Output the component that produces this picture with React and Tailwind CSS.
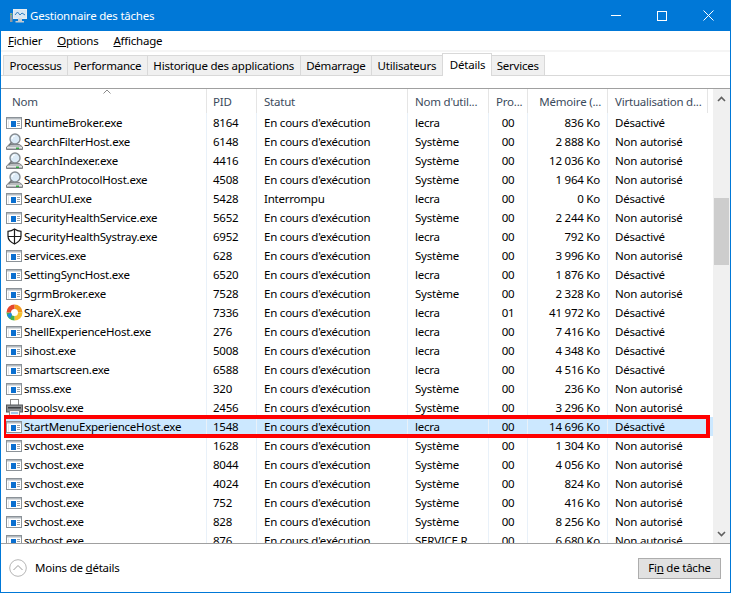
import React from "react";

const font = "font-['Noto_Sans','Open_Sans',sans-serif]";

const rows = [
  ["RuntimeBroker.exe", "8164", "En cours d'exécution", "lecra", "00", "836 Ko", "Désactivé", "app"],
  ["SearchFilterHost.exe", "6148", "En cours d'exécution", "Système", "00", "2 888 Ko", "Non autorisé", "search"],
  ["SearchIndexer.exe", "4416", "En cours d'exécution", "Système", "00", "12 036 Ko", "Non autorisé", "search"],
  ["SearchProtocolHost.exe", "4508", "En cours d'exécution", "Système", "00", "1 964 Ko", "Non autorisé", "search"],
  ["SearchUI.exe", "5428", "Interrompu", "lecra", "00", "0 Ko", "Désactivé", "app"],
  ["SecurityHealthService.exe", "5652", "En cours d'exécution", "Système", "00", "2 244 Ko", "Non autorisé", "app"],
  ["SecurityHealthSystray.exe", "6952", "En cours d'exécution", "lecra", "00", "792 Ko", "Désactivé", "shield"],
  ["services.exe", "628", "En cours d'exécution", "Système", "00", "3 996 Ko", "Non autorisé", "app"],
  ["SettingSyncHost.exe", "6520", "En cours d'exécution", "lecra", "00", "1 876 Ko", "Désactivé", "app"],
  ["SgrmBroker.exe", "7528", "En cours d'exécution", "Système", "00", "2 328 Ko", "Non autorisé", "app"],
  ["ShareX.exe", "7336", "En cours d'exécution", "lecra", "01", "41 972 Ko", "Désactivé", "sharex"],
  ["ShellExperienceHost.exe", "276", "En cours d'exécution", "lecra", "00", "7 416 Ko", "Désactivé", "app"],
  ["sihost.exe", "5008", "En cours d'exécution", "lecra", "00", "4 348 Ko", "Désactivé", "app"],
  ["smartscreen.exe", "6588", "En cours d'exécution", "lecra", "00", "4 516 Ko", "Désactivé", "app"],
  ["smss.exe", "320", "En cours d'exécution", "Système", "00", "236 Ko", "Non autorisé", "app"],
  ["spoolsv.exe", "2456", "En cours d'exécution", "Système", "00", "3 296 Ko", "Non autorisé", "printer"],
  ["StartMenuExperienceHost.exe", "1548", "En cours d'exécution", "lecra", "00", "14 696 Ko", "Désactivé", "app"],
  ["svchost.exe", "1628", "En cours d'exécution", "Système", "00", "1 304 Ko", "Non autorisé", "app"],
  ["svchost.exe", "8044", "En cours d'exécution", "Système", "00", "4 056 Ko", "Non autorisé", "app"],
  ["svchost.exe", "4024", "En cours d'exécution", "Système", "00", "824 Ko", "Non autorisé", "app"],
  ["svchost.exe", "752", "En cours d'exécution", "Système", "00", "416 Ko", "Non autorisé", "app"],
  ["svchost.exe", "828", "En cours d'exécution", "Système", "00", "8 256 Ko", "Non autorisé", "app"],
  ["svchost.exe", "876", "En cours d'exécution", "SERVICE R...", "00", "6 680 Ko", "Non autorisé", "app"],
];

const RowIcon = ({ type }) => {
  if (type === "search")
    return (
      <svg width="17" height="17" viewBox="0 0 17 17" className="shrink-0">
        <path d="M3.500 11.500h10l3 2.500v2.500H.5V14z" fill="#b9bcbf" stroke="#7c8083" />
        <path d="M1 14.500h15" stroke="#e6e6e6" />
        <rect x="10" y="14.500" width="3" height="1.500" fill="#35a844" />
        <circle cx="9" cy="6" r="5" fill="#dcebf7" stroke="#858c92" strokeWidth="1.400" />
        <path d="M6 6a3 3 0 0 1 3-3" fill="none" stroke="#fff" strokeWidth="1.200" />
        <path d="M5.500 9.500L3 12.500" stroke="#74787b" strokeWidth="1.800" />
      </svg>
    );
  if (type === "shield")
    return (
      <svg width="17" height="17" viewBox="0 0 17 17" className="shrink-0">
        <path d="M8.500 1c2 1.500 4 2.200 6.500 2.300v5c0 3.500-2.700 6-6.500 7.700C4.700 14.300 2 11.800 2 8.300v-5C4.500 3.200 6.500 2.500 8.500 1z" fill="#fff" stroke="#1a1a1a" strokeWidth="1.200" />
        <path d="M8.500 1v15M2 8.500h13" stroke="#1a1a1a" strokeWidth="1.200" />
      </svg>
    );
  if (type === "sharex")
    return (
      <svg width="17" height="17" viewBox="0 0 17 17" className="shrink-0">
        <path d="M8.500 .5a8 8 0 0 1 8 8h-4.500A3.500 3.500 0 0 0 8.500 5z" fill="#f39a1f" />
        <path d="M16.500 8.500a8 8 0 0 1-8 8V12a3.500 3.500 0 0 0 3.500-3.500z" fill="#f6c02c" />
        <path d="M8.500 16.500a8 8 0 0 1-8-8H5A3.500 3.500 0 0 0 8.500 12z" fill="#45b04a" />
        <path d="M.5 8.500a8 8 0 0 1 8-8V5A3.500 3.500 0 0 0 5 8.500z" fill="#e5472d" />
        <path d="M1 11a8 8 0 0 0 3 3.500l2-3.500-1-2.500z" fill="#1e88e5" />
      </svg>
    );
  if (type === "printer")
    return (
      <svg width="17" height="17" viewBox="0 0 17 17" className="shrink-0">
        <rect x="4.500" y=".5" width="8" height="6" fill="#fff" stroke="#8a8a8a" />
        <rect x=".5" y="6" width="16" height="7" fill="#8d8f92" stroke="#55585b" />
        <rect x="2" y="8" width="13" height="1.500" fill="#3c3f42" />
        <rect x="3.500" y="11.500" width="10" height="5" fill="#f4f4f4" stroke="#8a8a8a" />
        <path d="M5 14h7" stroke="#4d9be0" />
      </svg>
    );
  return (
    <svg width="16" height="14" viewBox="0 0 16 14" className="shrink-0">
      <rect x=".5" y="1.500" width="15" height="11" fill="#fff" stroke="#8b9298" />
      <rect x="1" y="2" width="14" height="1.500" fill="#b4babf" />
      <rect x="5" y="5" width="5" height="6" fill="#0a6fd0" />
      <path d="M11 5.500h3M11 7.500h3M11 9.500h3" stroke="#9aa1a7" />
      <path d="M2.500 4.500v7" stroke="#e3e6e8" />
    </svg>
  );
};

const Cell = ({ className = "", children }) => (
  <div className={`flex h-full items-center overflow-hidden whitespace-nowrap border-r border-[#e9f1f9] ${className}`}>
    {children}
  </div>
);

const Row = ({ row }) => {
  const selected = row[0] === "StartMenuExperienceHost.exe";
  return (
    <div className={`flex h-[19px] shrink-0 ${selected ? "bg-[#cce8ff]" : ""}`}>
      <Cell className="w-[203px] pl-[2px]">
        <span className="flex w-[20px] shrink-0 justify-start"><RowIcon type={row[7]} /></span>
        <span className="-ml-[2px]">{row[0]}</span>
      </Cell>
      <Cell className="w-[50px] pl-[6px]">{row[1]}</Cell>
      <Cell className="w-[151px] pl-[7px]">{row[2]}</Cell>
      <Cell className="w-[81px] pl-[7px]">{row[3]}</Cell>
      <Cell className="w-[39px] justify-center">{row[4]}</Cell>
      <Cell className="w-[80px] justify-end pr-[7px]">{row[5]}</Cell>
      <Cell className="w-[100px] pl-[7px] border-r-0">{row[6]}</Cell>
    </div>
  );
};

const Head = ({ className = "", children }) => (
  <div className={`flex h-full items-center overflow-hidden whitespace-nowrap border-r border-[#e5e5e5] pt-[1px] text-[#3b4a5c] ${className}`}>
    {children}
  </div>
);

const Tab = ({ children, active }) =>
  active ? (
    <div className="relative z-10 -mx-px -mt-[2px] flex h-[23px] items-center border border-b-0 border-[#d9d9d9] bg-white pl-[7px] pr-[6px]">
      {children}
    </div>
  ) : (
    <div className="flex h-[21px] items-center border border-[#d9d9d9] border-l-0 bg-[#f0f0f0] px-[5.5px] first:border-l">
      {children}
    </div>
  );

const App = () => {
  return (
    <div className={`${font} flex h-[593px] w-[731px] flex-col overflow-hidden border border-[#0078d7] bg-white text-[11.5px] tracking-[-0.22px] text-black`}>
      {/* title bar */}
      <div className="-mx-px -mt-px flex h-[31px] shrink-0 items-center bg-[#0078d7] pl-[9px] text-white">
        <svg width="18" height="16" viewBox="0 0 18 16" className="shrink-0">
          <rect x="4.500" y="1.500" width="13" height="9" fill="#d6e6f3" stroke="#e8edf1" />
          <path d="M6 7l2.500-3 2.500 3 2-2 3 2" fill="none" stroke="#2f7fc4" />
          <rect x="1" y="5" width="2.500" height="9" fill="#8f9aa3" />
          <rect x="1.500" y="6" width="1.500" height="1" fill="#4fc25c" />
          <path d="M9 10.500h4V13H9zM6.500 13H15v1.500H6.500z" fill="#c3ccd4" />
        </svg>
        <span className="ml-[3px]">Gestionnaire des tâches</span>
        <div className="ml-auto flex h-full items-center">
          <div className="flex w-[46px] justify-center">
            <div className="h-px w-[10px] bg-white" />
          </div>
          <div className="flex w-[46px] justify-center">
            <div className="h-[10px] w-[10px] border border-white" />
          </div>
          <div className="flex w-[46px] justify-center">
            <svg width="11" height="11" viewBox="0 0 11 11"><path d="M.5.500l10 10M10.500.500l-10 10" stroke="#fff" /></svg>
          </div>
        </div>
      </div>

      {/* menu */}
      <div className="flex h-[19px] shrink-0 items-center gap-[15px] pl-[7px]">
        <span><u>F</u>ichier</span>
        <span><u>O</u>ptions</span>
        <span><u>A</u>ffichage</span>
      </div>

      {/* tabs */}
      <div className="h-[2px] shrink-0 bg-[#f5f5f5]" />
      <div className="flex h-[24px] shrink-0 items-end border-b border-[#d9d9d9] pl-[2px]">
        <div className="flex items-end -mb-px">
          <Tab>Processus</Tab>
          <Tab>Performance</Tab>
          <Tab>Historique des applications</Tab>
          <Tab>Démarrage</Tab>
          <Tab>Utilisateurs</Tab>
          <Tab active>Détails</Tab>
          <Tab>Services</Tab>
        </div>
      </div>

      {/* table */}
      <div className="mt-[12px] flex min-h-0 flex-1 border-y border-[#a0a0a0]">
        <div className="ml-[1px] flex min-w-0 flex-1 flex-col overflow-hidden pl-[2px]">
          <div className="relative flex h-[24px] shrink-0">
            <svg width="8" height="5" viewBox="0 0 8 5" className="absolute left-[99px] top-0">
              <path d="M.5 4.500L4 1l3.500 3.500" fill="none" stroke="#8a8a8a" />
            </svg>
            <Head className="w-[203px] pl-[8px]">Nom</Head>
            <Head className="w-[50px] pl-[6px]">PID</Head>
            <Head className="w-[151px] pl-[7px]">Statut</Head>
            <Head className="w-[81px] pl-[7px]">Nom d'util...</Head>
            <Head className="w-[39px] pl-[7px]">Pro...</Head>
            <Head className="w-[80px] justify-end pr-[6px]">Mémoire (...</Head>
            <Head className="w-[100px] pl-[7px]">Virtualisation d...</Head>
          </div>
          <div className="relative flex min-h-0 flex-1 flex-col overflow-hidden">
            {rows.map((r, i) => (
              <Row key={i} row={r} />
            ))}
            {/* red box from the article this was taken for */}
            <div className="absolute left-[-2px] top-[302px] h-[23px] w-[708px] border-[4px] border-[#ff0000]" />
          </div>
        </div>
        {/* scrollbar */}
        <div className="relative flex w-[17px] shrink-0 flex-col items-center bg-[#f0f0f0]">
          <svg width="9" height="6" viewBox="0 0 9 6" className="mt-[7px]">
            <path d="M1 5l3.500-3.500L8 5" fill="none" stroke="#606060" strokeWidth="1.600" />
          </svg>
          <div className="mt-[96px] h-[67px] w-[15px] bg-[#cdcdcd]" />
          <svg width="9" height="6" viewBox="0 0 9 6" className="mb-[6px] mt-auto">
            <path d="M1 1l3.500 3.500L8 1" fill="none" stroke="#606060" strokeWidth="1.600" />
          </svg>
        </div>
      </div>

      {/* bottom */}
      <div className="flex h-[48px] shrink-0 items-center justify-between pl-[8px] pr-[9px]">
        <div className="flex items-center gap-[8px]">
          <svg width="18" height="18" viewBox="0 0 18 18">
            <circle cx="9" cy="9" r="8.300" fill="#fff" stroke="#b5b5b5" />
            <path d="M4.500 11L9 6.500l4.500 4.500" fill="none" stroke="#9a9a9a" />
          </svg>
          <span>Moins de <u>d</u>étails</span>
        </div>
        <div className="flex h-[21px] w-[83px] items-center justify-center border border-[#adadad] bg-[#e1e1e1]">
          <span>Fi<u>n</u> de tâche</span>
        </div>
      </div>
    </div>
  );
};

export default App;
